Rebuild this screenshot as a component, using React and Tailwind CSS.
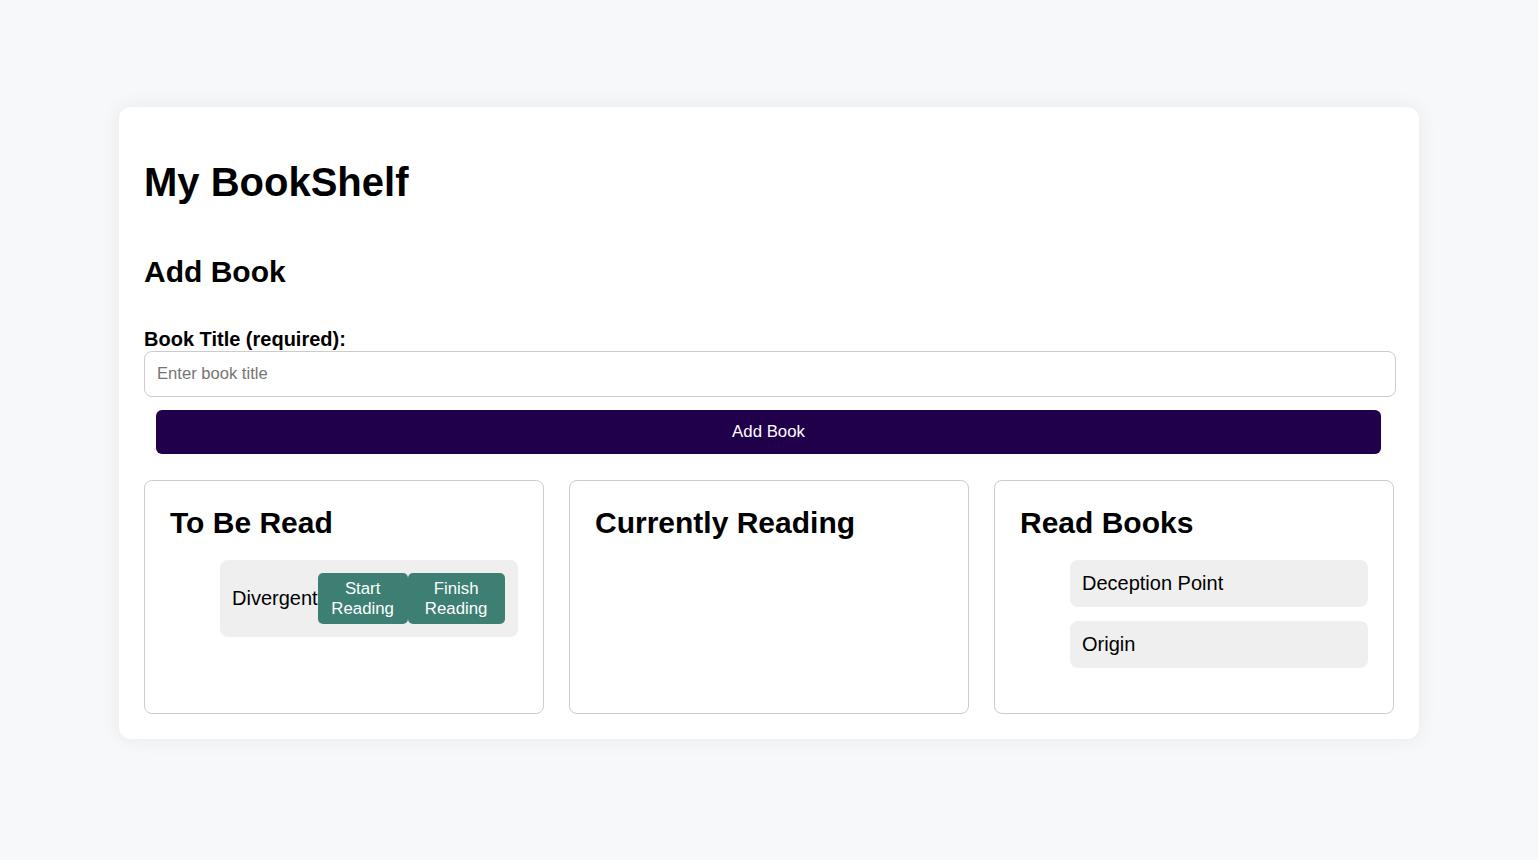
export default function App() {
  const font = { fontFamily: '"Liberation Sans", Arial, sans-serif' };
  return (
    <div className="min-h-[860px] bg-[#f7f8fa] pt-[107px] text-black" style={font}>
      <div className="mx-auto w-[1300px] rounded-xl bg-white px-[25px] pb-[25px] pt-[52px] shadow-[0_0_20px_rgba(0,0,0,0.07)]">
        <h1 className="m-0 text-[40px] font-bold leading-[46px]">My BookShelf</h1>

        <h2 className="mt-[50px] text-[30px] font-bold leading-[34px]">Add Book</h2>

        <label className="mt-[39px] block text-[20px] font-bold leading-[23px]">Book Title (required):</label>
        <input
          type="text"
          placeholder="Enter book title"
          className="block h-[46px] w-[1252px] rounded-lg border border-[#ccc] px-3 text-[16.6px] outline-none placeholder:text-[#757575]"
        />
        <button className="mx-3 mt-[13px] block h-[44px] w-[1225px] rounded-md bg-[#20004b] text-[16.8px] text-white">
          Add Book
        </button>

        <div className="mt-[26px] grid grid-cols-3 gap-[25px]">
          <Column title="To Be Read">
            <li className="flex items-center rounded-lg bg-[#efefef] px-3 py-[13px]">
              <span className="text-[20px] leading-[23px]">Divergent</span>
              <ActionBtn w="w-[90px]">Start Reading</ActionBtn>
              <ActionBtn w="w-[97px]">Finish Reading</ActionBtn>
            </li>
          </Column>
          <Column title="Currently Reading" />
          <Column title="Read Books">
            <li className="rounded-lg bg-[#efefef] px-3 py-3 text-[20px] leading-[23px]">Deception Point</li>
            <li className="rounded-lg bg-[#efefef] px-3 py-3 text-[20px] leading-[23px]">Origin</li>
          </Column>
        </div>
      </div>
    </div>
  );
}

function Column({ title, children }) {
  return (
    <div className="rounded-lg border border-[#ccc] px-[25px] pb-[25px] pt-[25px]">
      <h2 className="text-[30px] font-bold leading-[34px]">{title}</h2>
      <ul className="mb-5 mt-[20px] flex flex-col gap-[14px] pl-[50px]">{children}</ul>
    </div>
  );
}

function ActionBtn({ w, children }) {
  return (
    <button className={w + ' h-[51px] shrink-0 rounded-[5px] bg-[#3d8073] px-2 text-[16.8px] leading-[20px] text-white'}>
      {children}
    </button>
  );
}
